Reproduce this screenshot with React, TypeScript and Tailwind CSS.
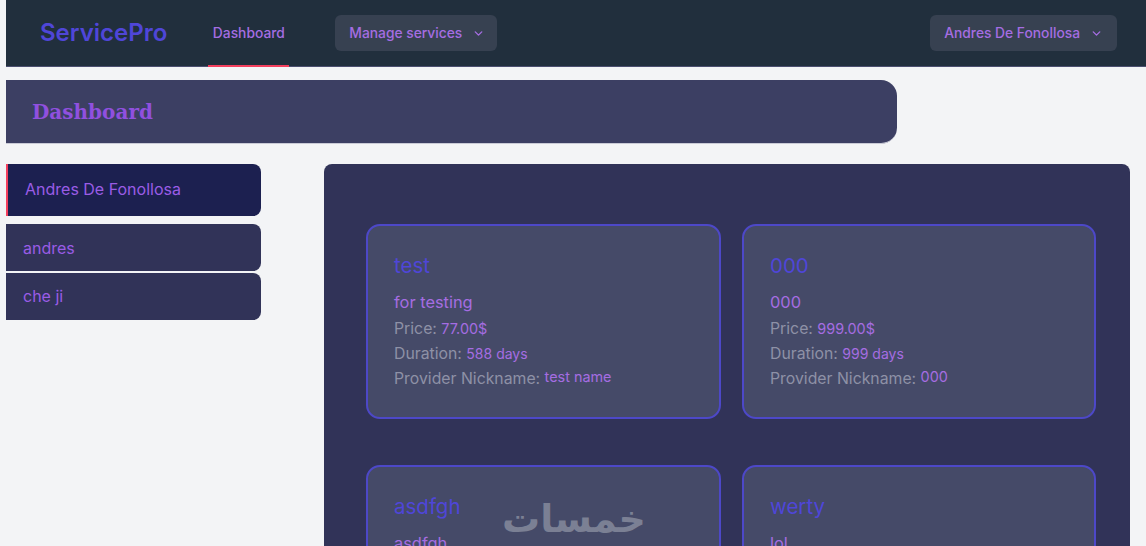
import { ChevronDown } from "lucide-react";

const font = "font-['Inter','Noto_Sans',sans-serif]";

function Card({ title, desc, price, dur, nick }: { title: string; desc: string; price: string; dur: string; nick: string }) {
  return (
    <div className="h-[195px] rounded-[14px] border-2 border-[#4d48c8] bg-[#454a68] pl-[26px] pt-[26px]">
      <div className="text-[20.5px] leading-[28px] text-[#4f46d8]">{title}</div>
      <div className="mt-[10px] text-[16.4px] leading-[24px] text-[#a56de2]">{desc}</div>
      <div className="mt-[2px] text-[15.8px] leading-[25px] text-[#8e91a6]">
        Price: <span className="text-[14.4px] text-[#a56de2]">{price}</span>
      </div>
      <div className="text-[15.8px] leading-[25px] text-[#8e91a6]">
        Duration: <span className="text-[14px] text-[#a56de2]">{dur}</span>
      </div>
      <div className="text-[15.8px] leading-[25px] text-[#8e91a6]">
        Provider Nickname: <span className="relative top-[-2px] text-[14.4px] text-[#a56de2]">{nick}</span>
      </div>
    </div>
  );
}

function Menu({ label, pad }: { label: string; pad: string }) {
  return (
    <div className={`flex h-[36px] items-center gap-[10px] rounded-[6px] bg-[#374151] pl-[14px] text-[13.8px] font-medium text-[#a56de2] ${pad}`}>
      {label}
      <ChevronDown size={13} strokeWidth={2.5} />
    </div>
  );
}

export default function App() {
  return (
    <div className={`${font} h-[546px] overflow-hidden bg-[#f3f4f6] pl-[6px]`}>
      <nav className="flex h-[67px] items-center border-b border-[#4b4f70] bg-[#212f3d] pr-[29px]">
        <div className="ml-[34px] text-[24px] font-semibold text-[#4f46d8]">ServicePro</div>
        <div className="ml-[41px] flex h-[67px] w-[81px] items-center justify-center border-b-2 border-[#f43f5e] pt-[2px] text-[13.8px] font-medium text-[#a56de2]">
          Dashboard
        </div>
        <div className="ml-[46px]"><Menu label="Manage services" pad="pr-[12px]" /></div>
        <div className="ml-auto"><Menu label="Andres De Fonollosa" pad="pr-[14px]" /></div>
      </nav>

      <header className="mt-[13px] flex h-[64px] w-[891px] items-center rounded-r-[16px] border-b border-[#c9cad6] bg-[#3c3f63] pl-[26px] font-['DejaVu_Serif',serif] text-[20px] font-bold text-[#9050df]">
        Dashboard
      </header>

      <div className="mt-[20px] flex items-start">
        <aside className="flex w-[255px] flex-col text-[16px] text-[#9a5ce6]">
          <div className="flex h-[52px] items-center rounded-r-[8px] border-l-2 border-[#f43f5e] bg-[#1c2050] pb-[3px] pl-[17px]">Andres De Fonollosa</div>
          <div className="mt-[8px] flex h-[47px] items-center rounded-r-[8px] bg-[#313358] pl-[17px]">andres</div>
          <div className="mt-[2px] flex h-[47px] items-center rounded-r-[8px] bg-[#313358] pb-[1px] pl-[17px]">che ji</div>
        </aside>
        <main className="relative ml-[63px] h-[500px] w-[806px] rounded-[8px] bg-[#313358] pl-[42px] pt-[60px]">
          <div className="grid grid-cols-[355px_354px] gap-x-[21px] gap-y-[46px]">
            <Card title="test" desc="for testing" price="77.00$" dur="588 days" nick="test name" />
            <Card title="000" desc="000" price="999.00$" dur="999 days" nick="000" />
            <Card title="asdfgh" desc="asdfgh" price="" dur="" nick="" />
            <Card title="werty" desc="lol" price="" dur="" nick="" />
          </div>
          <div dir="rtl" className="absolute left-[178px] top-[331px] font-['DejaVu_Sans',sans-serif] text-[38px] font-bold leading-[48px] text-[#7b8094]">خمسات</div>
        </main>
      </div>
    </div>
  );
}
